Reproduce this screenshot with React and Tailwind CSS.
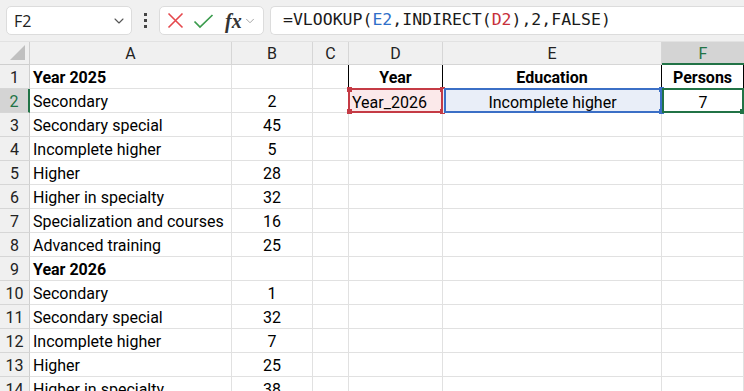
import { ChevronDown } from 'lucide-react';

const cols = ['A', 'B', 'C', 'D', 'E', 'F'];

const rows = [
  { a: 'Year 2025', bold: true },
  { a: 'Secondary', b: '2' },
  { a: 'Secondary special', b: '45' },
  { a: 'Incomplete higher', b: '5' },
  { a: 'Higher', b: '28' },
  { a: 'Higher in specialty', b: '32' },
  { a: 'Specialization and courses', b: '16' },
  { a: 'Advanced training', b: '25' },
  { a: 'Year 2026', bold: true },
  { a: 'Secondary', b: '1' },
  { a: 'Secondary special', b: '32' },
  { a: 'Incomplete higher', b: '7' },
  { a: 'Higher', b: '25' },
  { a: 'Higher in specialty', b: '38' }
];

const cellFont = { fontFamily: 'Roboto, "Noto Sans", sans-serif' };

const Handle = ({ pos, color }) => (
  <span className={`absolute w-[5px] h-[5px] ${color} ${pos}`} />
);

const Toolbar = () => (
  <div className="h-[42px] bg-[#f0f0f0] flex items-center pl-[6px] gap-0 border-b border-[#e2e2e2]">
    <div className="w-[126px] h-[29px] bg-white border border-[#dcdcdc] rounded-[5px] flex items-center justify-between pl-[7px] pr-[4px] text-[16px] text-[#202020]">
      <span style={{ fontFamily: '"Open Sans", "Noto Sans", sans-serif' }}>F2</span>
      <ChevronDown className="w-[16px] h-[16px] text-[#555]" strokeWidth={1.6} />
    </div>
    <div className="w-[27px] flex flex-col items-center gap-[3px]">
      <span className="w-[3px] h-[3px] bg-[#444]" />
      <span className="w-[3px] h-[3px] bg-[#444]" />
      <span className="w-[3px] h-[3px] bg-[#444]" />
    </div>
    <div className="w-[105px] h-[29px] bg-white border border-[#dcdcdc] rounded-[5px] flex items-center pl-[7px] gap-[9px]">
      <svg width="17" height="17" viewBox="0 0 17 17">
        <path d="M1.5 1.5 L15.5 15.5 M15.5 1.5 L1.5 15.5" stroke="#e5484d" strokeWidth="1.6" fill="none" />
      </svg>
      <svg width="21" height="16" viewBox="0 0 21 16">
        <path d="M1.5 8.5 L7 14 L19.5 2" stroke="#3a9b4c" strokeWidth="1.7" fill="none" />
      </svg>
      <div className="flex items-center ml-[2px]">
        <span className="text-[20px] italic font-bold text-[#333] leading-none" style={{ fontFamily: '"Liberation Serif", "DejaVu Serif", serif' }}>fx</span>
        <ChevronDown className="w-[14px] h-[14px] text-[#999] ml-[1px]" strokeWidth={1.5} />
      </div>
    </div>
    <div className="ml-[6px] flex-1 h-[29px] bg-white border border-r-0 border-[#dcdcdc] rounded-l-[5px] flex items-center pl-[12px] text-[16.5px] text-[#1a1a1a] whitespace-nowrap" style={{ fontFamily: '"DejaVu Sans Mono", "Liberation Mono", monospace' }}>
      <span>=VLOOKUP(</span>
      <span className="text-[#2f6fc9]">E2</span>
      <span>,INDIRECT(</span>
      <span className="text-[#c7303a]">D2</span>
      <span>),2,FALSE)</span>
    </div>
  </div>
);

const App = () => {
  return (
    <div className="w-[744px] h-[391px] overflow-hidden bg-white" style={cellFont}>
      <Toolbar />
      <div className="grid grid-cols-[30px_202px_81px_36px_94px_219px_82px] text-[16px] leading-none text-black">
        {/* header row */}
        <div className="h-[23px] bg-[#f0f0f0] border-r border-b border-[#cfcfcf] relative overflow-hidden">
          <span className="absolute right-[4px] bottom-[4px] w-0 h-0 border-l-[15px] border-l-transparent border-b-[15px] border-b-[#c0c0c0]" />
        </div>
        {cols.map((c) =>
          c === 'F' ? (
            <div key={c} className="h-[23px] bg-[#d4d4d4] border-b-2 border-[#217346] flex items-center justify-center pt-[3px] text-[#217346]">
              {c}
            </div>
          ) : (
            <div key={c} className="h-[23px] bg-[#f0f0f0] border-r border-b border-[#d6d6d6] flex items-center justify-center pt-[2px] text-[#222]">
              {c}
            </div>
          )
        )}

        {rows.map((r, i) => {
          const n = i + 1;
          const active = n === 2;
          return [
            <div
              key={`h${n}`}
              className={`h-[24px] border-b border-[#d6d6d6] flex items-center justify-center pt-[3px] text-[#222] ${active ? 'bg-[#d4d4d4] border-r-2 border-r-[#217346] text-[#217346]' : 'bg-[#f0f0f0] border-r border-r-[#cfcfcf]'}`}
            >
              {n}
            </div>,
            <div key={`a${n}`} className={`h-[24px] border-r border-b border-[#e1e1e1] flex items-center pt-[3px] pl-[3px] whitespace-nowrap ${r.bold ? 'font-bold' : ''}`}>
              {r.a}
            </div>,
            <div key={`b${n}`} className="h-[24px] border-r border-b border-[#e1e1e1] flex items-center justify-center pt-[3px]">
              {r.b}
            </div>,
            <div key={`c${n}`} className={`h-[24px] border-b border-[#e1e1e1] ${n <= 2 ? 'border-r border-r-black' : 'border-r'}`} />,
            n === 1 ? (
              <div key={`d${n}`} className="h-[24px] border-r border-r-black border-b border-b-[#e1e1e1] flex items-center justify-center pt-[3px] font-bold">Year</div>
            ) : n === 2 ? (
              <div key={`d${n}`} className="h-[24px] relative -ml-px bg-[#fbe9ea] flex items-center pt-[3px] pl-[4px]">
                <span className="absolute inset-0 -top-px border-2 border-[#c53b45]" />
                <Handle pos="-left-[1px] -top-[2px]" color="bg-[#c53b45]" />
                <Handle pos="-right-[2px] -top-[2px]" color="bg-[#c53b45]" />
                <Handle pos="-left-[1px] -bottom-[1px]" color="bg-[#c53b45]" />
                <Handle pos="-right-[2px] -bottom-[1px]" color="bg-[#c53b45]" />
                <span className="relative">Year_2026</span>
              </div>
            ) : (
              <div key={`d${n}`} className="h-[24px] border-r border-b border-[#e1e1e1]" />
            ),
            n === 1 ? (
              <div key={`e${n}`} className="h-[24px] border-r border-r-black border-b border-b-[#e1e1e1] flex items-center justify-center pt-[3px] font-bold">Education</div>
            ) : n === 2 ? (
              <div key={`e${n}`} className="h-[24px] relative bg-[#e9eef8] flex items-center justify-center pt-[3px]">
                <span className="absolute inset-0 -top-px left-[1px] border-2 border-[#3b6fc6]" />
                <Handle pos="-right-[2px] -top-[2px]" color="bg-[#3b6fc6]" />
                <Handle pos="-right-[2px] -bottom-[1px]" color="bg-[#3b6fc6]" />
                <span className="relative">Incomplete higher</span>
              </div>
            ) : (
              <div key={`e${n}`} className="h-[24px] border-r border-b border-[#e1e1e1]" />
            ),
            n === 1 ? (
              <div key={`f${n}`} className="h-[24px] border-r border-r-black border-b border-b-[#e1e1e1] flex items-center justify-center pt-[3px] font-bold">Persons</div>
            ) : n === 2 ? (
              <div key={`f${n}`} className="h-[24px] relative flex items-center justify-center pt-[3px]">
                <span className="absolute inset-0 -top-px border-2 border-[#217346]" />
                <Handle pos="-right-[1px] -bottom-[1px]" color="bg-[#217346]" />
                <span className="relative">7</span>
              </div>
            ) : (
              <div key={`f${n}`} className="h-[24px] border-r border-b border-[#e1e1e1]" />
            )
          ];
        })}
      </div>
    </div>
  );
};

export default App;
